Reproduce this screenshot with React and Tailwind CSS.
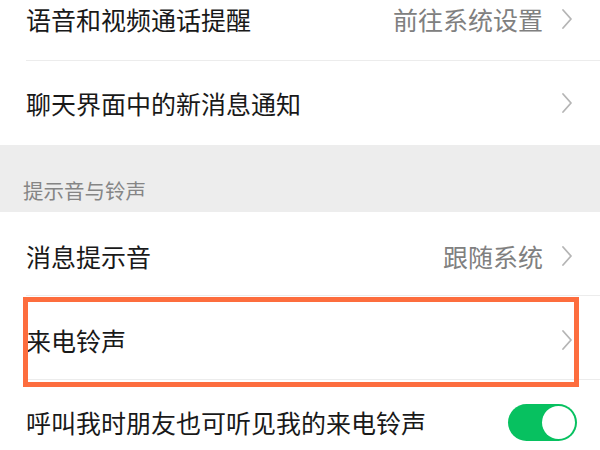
import React from "react";

const font = { fontFamily: '"Noto Sans CJK SC", "Noto Sans", sans-serif' };

function Chevron() {
  return (
    <svg width="12" height="22" viewBox="0 0 12 22" className="shrink-0">
      <polyline points="2,2 10,11 2,20" fill="none" stroke="#b5b5b5" strokeWidth="1.8" strokeLinecap="round" strokeLinejoin="round" />
    </svg>
  );
}

function Row({ label, value, chevron = true, divider = true, children, extra = "" }) {
  return (
    <div className={`relative h-[84px] ml-[26px] flex items-center pr-[27px] ${divider ? "border-b border-[#ececec]" : ""} ${extra}`}>
      <span className="flex-1 text-[25px] leading-[34px] text-[#191919] whitespace-nowrap">{label}</span>
      {value && <span className="text-[25px] leading-[34px] text-[#808080] mr-[18px] whitespace-nowrap">{value}</span>}
      {chevron && <Chevron />}
      {children}
    </div>
  );
}

export default function App() {
  return (
    <div className="w-[600px] h-[450px] overflow-hidden bg-white" style={font}>
      <div className="-mt-[23px]">
        <Row label="语音和视频通话提醒" value="前往系统设置" />
        <Row label="聊天界面中的新消息通知" divider={false} />
        <div className="h-[67px] bg-[#ededed] flex items-end pb-[8px] pl-[23px]">
          <span className="text-[20.5px] leading-[28px] text-[#858585]">提示音与铃声</span>
        </div>
        <Row label="消息提示音" value="跟随系统" extra="pt-[4px]" />
        <div className="relative">
          <Row label="来电铃声" extra="pt-[4px]" />
          <div className="absolute left-[23px] top-[1px] w-[556px] h-[90px] border-[5px] border-[#fd6d3e] pointer-events-none" />
        </div>
        <div className="h-[84px] ml-[26px] flex items-center pr-[23px]">
          <span className="flex-1 text-[25px] leading-[34px] text-[#191919] whitespace-nowrap">呼叫我时朋友也可听见我的来电铃声</span>
          <div className="w-[69px] h-[37px] rounded-full bg-[#07c160] flex items-center justify-end pr-[2px]">
            <div className="w-[33px] h-[33px] rounded-full bg-white" />
          </div>
        </div>
      </div>
    </div>
  );
}
